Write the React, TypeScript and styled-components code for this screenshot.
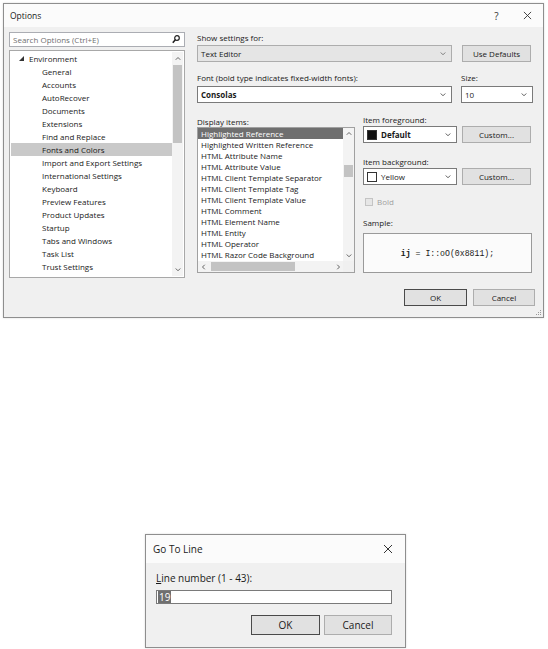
import React from "react";
import styled, { createGlobalStyle } from "styled-components";

const GlobalStyle = createGlobalStyle`
  html, body { margin: 0; padding: 0; background: #ffffff; }
  body { font-family: "Open Sans", "Noto Sans", sans-serif; color: #1a1a1a; }
  * { box-sizing: border-box; }
`;

const Page = styled.div`
  width: 548px;
  height: 649px;
  overflow: hidden;
  display: flex;
  flex-direction: column;
  align-items: flex-start;
`;

/* ---------- generic window ---------- */
const Window = styled.div<{ $w: number; $h: number; $mt: number; $ml: number }>`
  margin-top: ${(p) => p.$mt}px;
  margin-left: ${(p) => p.$ml}px;
  width: ${(p) => p.$w}px;
  height: ${(p) => p.$h}px;
  flex: none;
  border: 1px solid #8e8e8e;
  background: #f0f0f0;
  display: flex;
  flex-direction: column;
  position: relative;
  box-shadow: 0 0 2px rgba(0, 0, 0, 0.15);
`;

const TitleBar = styled.div<{ $h: number; $pl: number }>`
  height: ${(p) => p.$h}px;
  flex: none;
  background: #fbfbfb;
  display: flex;
  align-items: center;
  padding-left: ${(p) => p.$pl}px;
`;

const TitleText = styled.div<{ $size: number }>`
  flex: 1;
  font-size: ${(p) => p.$size}px;
  color: #1a1a1a;
`;

const TitleButton = styled.div<{ $w: number }>`
  width: ${(p) => p.$w}px;
  height: 100%;
  display: flex;
  align-items: center;
  justify-content: center;
  font-size: 10px;
  color: #333;
`;

const CloseX = ({ size }: { size: number }) => (
  <svg width={size} height={size} viewBox="0 0 10 10">
    <path d="M1 1 L9 9 M9 1 L1 9" stroke="#333" strokeWidth="1" fill="none" />
  </svg>
);

type Dir = "up" | "down" | "left" | "right";
const Chevron = ({ dir, color = "#606060", w = 6 }: { dir: Dir; color?: string; w?: number }) => {
  const paths: Record<Dir, string> = {
    down: "M1 2 L4 5 L7 2",
    up: "M1 5 L4 2 L7 5",
    left: "M5 1 L2 4 L5 7",
    right: "M3 1 L6 4 L3 7",
  };
  return (
    <svg width={w} height={w} viewBox="0 0 8 8">
      <path d={paths[dir]} stroke={color} strokeWidth="1.3" fill="none" />
    </svg>
  );
};

/* ---------- Options body ---------- */
const OptionsBody = styled.div`
  flex: 1;
  display: flex;
  flex-direction: column;
  padding: 5px 9px 0 5px;
`;

const MainArea = styled.div`
  display: flex;
  gap: 12px;
  height: 246px;
`;

const LeftPane = styled.div`
  width: 176px;
  display: flex;
  flex-direction: column;
  gap: 3px;
`;

const SearchBox = styled.div`
  height: 15px;
  border: 1px solid #abadb3;
  background: #fff;
  display: flex;
  align-items: center;
  justify-content: space-between;
  padding: 0 4px 0 3px;
  font-size: 8px;
  color: #707070;
`;

const Tree = styled.div`
  height: 228px;
  border: 1px solid #a8a8a8;
  background: #fff;
  display: flex;
  padding: 1px;
`;

const TreeRows = styled.div`
  flex: 1;
  overflow: hidden;
  display: flex;
  flex-direction: column;
`;

const TreeRow = styled.div<{ $indent: number; $selected?: boolean }>`
  height: 13px;
  flex: none;
  display: flex;
  align-items: center;
  gap: 5px;
  padding-left: ${(p) => p.$indent}px;
  font-size: 8px;
  white-space: nowrap;
  background: ${(p) => (p.$selected ? "#c9c9c9" : "transparent")};
`;

const VScroll = styled.div`
  width: 11px;
  flex: none;
  display: flex;
  flex-direction: column;
  background: #f3f3f3;
`;

const ArrowBox = styled.div<{ $h: number }>`
  height: ${(p) => p.$h}px;
  width: 11px;
  flex: none;
  display: flex;
  align-items: center;
  justify-content: center;
`;

const Track = styled.div`
  flex: 1;
  display: flex;
  flex-direction: column;
  align-items: center;
`;

const Thumb = styled.div`
  width: 9px;
  background: #c3c3c3;
`;

const RightPane = styled.div`
  width: 336px;
  display: flex;
  flex-direction: column;
`;

const Row = styled.div<{ $mt?: number; $gap: number }>`
  display: flex;
  gap: ${(p) => p.$gap}px;
  margin-top: ${(p) => p.$mt ?? 0}px;
  flex: none;
`;

const Label = styled.div<{ $w?: number; $h?: number; $mt?: number; $muted?: boolean }>`
  width: ${(p) => (p.$w ? `${p.$w}px` : "auto")};
  height: ${(p) => p.$h ?? 12}px;
  line-height: ${(p) => p.$h ?? 12}px;
  margin-top: ${(p) => p.$mt ?? 0}px;
  font-size: 8px;
  white-space: nowrap;
  color: ${(p) => (p.$muted ? "#a0a0a0" : "#1a1a1a")};
  flex: none;
`;

const Combo = styled.div<{ $w: number; $disabled?: boolean }>`
  width: ${(p) => p.$w}px;
  height: 17px;
  flex: none;
  border: 1px solid ${(p) => (p.$disabled ? "#adadad" : "#7a7a7a")};
  background: ${(p) => (p.$disabled ? "#e5e5e5" : "#ffffff")};
  display: flex;
  align-items: center;
  padding: 0 5px 0 3px;
  gap: 4px;
  font-size: 8px;
`;

const ComboText = styled.span<{ $bold?: boolean }>`
  flex: 1;
  font-weight: ${(p) => (p.$bold ? 700 : 400)};
  white-space: nowrap;
`;

const Swatch = styled.span<{ $fill: string }>`
  width: 10px;
  height: 10px;
  flex: none;
  background: ${(p) => p.$fill};
  border: 1px solid #333;
`;

const Button = styled.div<{ $w: number; $h: number; $default?: boolean; $size?: number }>`
  width: ${(p) => p.$w}px;
  height: ${(p) => p.$h}px;
  flex: none;
  border: 1px solid ${(p) => (p.$default ? "#4a4a4a" : "#adadad")};
  background: #e1e1e1;
  display: flex;
  align-items: center;
  justify-content: center;
  font-size: ${(p) => p.$size ?? 8}px;
  color: #1a1a1a;
`;

const LowerArea = styled.div`
  display: flex;
  gap: 8px;
  margin-top: 11px;
`;

const ItemsCol = styled.div`
  width: 158px;
  display: flex;
  flex-direction: column;
`;

const AttrCol = styled.div`
  width: 170px;
  display: flex;
  flex-direction: column;
`;

const ItemsList = styled.div`
  height: 146px;
  border: 1px solid #a0a0a0;
  background: #fff;
  display: grid;
  grid-template-columns: 1fr 11px;
  grid-template-rows: 1fr 11px;
`;

const ItemsRows = styled.div`
  overflow: hidden;
  display: flex;
  flex-direction: column;
`;

const ItemRow = styled.div<{ $selected?: boolean }>`
  height: 11px;
  flex: none;
  display: flex;
  align-items: center;
  padding-left: 3px;
  font-size: 8px;
  white-space: nowrap;
  background: ${(p) => (p.$selected ? "#6f6f6f" : "transparent")};
  color: ${(p) => (p.$selected ? "#ffffff" : "#1a1a1a")};
`;

const HScroll = styled.div`
  display: flex;
  align-items: center;
  background: #f3f3f3;
`;

const HTrack = styled.div`
  flex: 1;
  height: 100%;
  display: flex;
  align-items: center;
`;

const HThumb = styled.div`
  height: 9px;
  background: #c3c3c3;
`;

const Corner = styled.div`
  background: #f0f0f0;
`;

const CheckRow = styled.div`
  margin-top: 11px;
  height: 12px;
  display: flex;
  align-items: center;
  gap: 4px;
  padding-left: 2px;
`;

const CheckBox = styled.span`
  width: 8px;
  height: 8px;
  border: 1px solid #c4c4c4;
  background: #e6e6e6;
`;

const SampleBox = styled.div`
  margin-top: 4px;
  height: 40px;
  width: 169px;
  border: 1px solid #9a9a9a;
  background: #fbfbfb;
  display: flex;
  align-items: center;
  justify-content: center;
  font-family: "Liberation Mono", "DejaVu Sans Mono", monospace;
  font-size: 8.2px;
  color: #1a1a1a;
`;

const ButtonBar = styled.div<{ $mt: number; $gap: number; $mr: number }>`
  display: flex;
  justify-content: flex-end;
  gap: ${(p) => p.$gap}px;
  margin-top: ${(p) => p.$mt}px;
  margin-right: ${(p) => p.$mr}px;
`;

const Grip = styled.div`
  position: absolute;
  right: 1px;
  bottom: 1px;
  width: 8px;
  height: 8px;
  display: flex;
`;

/* ---------- Go To Line ---------- */
const GoBody = styled.div`
  flex: 1;
  display: flex;
  flex-direction: column;
  padding: 9px 13px 0 10px;
`;

const GoLabel = styled.div`
  height: 13px;
  line-height: 13px;
  font-size: 10px;
  color: #1a1a1a;
`;

const Underlined = styled.span`
  text-decoration: underline;
`;

const TextInput = styled.div`
  margin-top: 5px;
  height: 14px;
  border: 1px solid #7a7a7a;
  background: #fff;
  display: flex;
  align-items: center;
  padding-left: 1px;
`;

const Selection = styled.span`
  background: #6f6f6f;
  color: #fff;
  font-size: 10px;
  line-height: 12px;
  height: 12px;
  padding: 0 1px;
`;

const SearchIcon = () => (
  <svg width="8" height="9" viewBox="0 0 8 9">
    <circle cx="5" cy="3" r="2.3" stroke="#222" strokeWidth="1.2" fill="none" />
    <path d="M3.3 4.8 L0.8 7.8" stroke="#222" strokeWidth="1.6" />
  </svg>
);

const ExpandedTri = () => (
  <svg width="5" height="5" viewBox="0 0 5 5">
    <polygon points="5,0 5,5 0,5" fill="#333" />
  </svg>
);

const treeItems = [
  "General",
  "Accounts",
  "AutoRecover",
  "Documents",
  "Extensions",
  "Find and Replace",
  "Fonts and Colors",
  "Import and Export Settings",
  "International Settings",
  "Keyboard",
  "Preview Features",
  "Product Updates",
  "Startup",
  "Tabs and Windows",
  "Task List",
  "Trust Settings",
  "Web Browser",
];

const displayItems = [
  "Highlighted Reference",
  "Highlighted Written Reference",
  "HTML Attribute Name",
  "HTML Attribute Value",
  "HTML Client Template Separator",
  "HTML Client Template Tag",
  "HTML Client Template Value",
  "HTML Comment",
  "HTML Element Name",
  "HTML Entity",
  "HTML Operator",
  "HTML Razor Code Background",
];

export default function App() {
  return (
    <Page>
      <GlobalStyle />
      <Window $w={541} $h={315} $mt={3} $ml={3}>
        <TitleBar $h={23} $pl={6}>
          <TitleText $size={8.5}>Options</TitleText>
          <TitleButton $w={31}>?</TitleButton>
          <TitleButton $w={31}>
            <CloseX size={9} />
          </TitleButton>
        </TitleBar>
        <OptionsBody>
          <MainArea>
            <LeftPane>
              <SearchBox>
                <span>Search Options (Ctrl+E)</span>
                <SearchIcon />
              </SearchBox>
              <Tree>
                <TreeRows>
                  <TreeRow $indent={8}>
                    <ExpandedTri />
                    <span>Environment</span>
                  </TreeRow>
                  {treeItems.map((t) => (
                    <TreeRow key={t} $indent={31} $selected={t === "Fonts and Colors"}>
                      {t}
                    </TreeRow>
                  ))}
                </TreeRows>
                <VScroll>
                  <ArrowBox $h={13}>
                    <Chevron dir="up" />
                  </ArrowBox>
                  <Track>
                    <Thumb style={{ height: 78 }} />
                  </Track>
                  <ArrowBox $h={13}>
                    <Chevron dir="down" />
                  </ArrowBox>
                </VScroll>
              </Tree>
            </LeftPane>
            <RightPane>
              <Label>Show settings for:</Label>
              <Row $mt={1} $gap={10}>
                <Combo $w={255} $disabled>
                  <ComboText>Text Editor</ComboText>
                  <Chevron dir="down" color="#777" />
                </Combo>
                <Button $w={69} $h={17}>
                  Use Defaults
                </Button>
              </Row>
              <Row $mt={10} $gap={9}>
                <Label $w={255}>Font (bold type indicates fixed-width fonts):</Label>
                <Label>Size:</Label>
              </Row>
              <Row $mt={2} $gap={9}>
                <Combo $w={255}>
                  <ComboText $bold>Consolas</ComboText>
                  <Chevron dir="down" color="#555" />
                </Combo>
                <Combo $w={72}>
                  <ComboText>10</ComboText>
                  <Chevron dir="down" color="#555" />
                </Combo>
              </Row>
              <LowerArea>
                <ItemsCol>
                  <Label $h={11} $mt={2}>Display items:</Label>
                  <ItemsList>
                    <ItemsRows>
                      {displayItems.map((t, i) => (
                        <ItemRow key={t} $selected={i === 0}>
                          {t}
                        </ItemRow>
                      ))}
                    </ItemsRows>
                    <VScroll>
                      <ArrowBox $h={11}>
                        <Chevron dir="up" />
                      </ArrowBox>
                      <Track>
                        <Thumb style={{ marginTop: 26, height: 12 }} />
                      </Track>
                      <ArrowBox $h={11}>
                        <Chevron dir="down" />
                      </ArrowBox>
                    </VScroll>
                    <HScroll>
                      <ArrowBox $h={11}>
                        <Chevron dir="left" />
                      </ArrowBox>
                      <HTrack>
                        <HThumb style={{ marginLeft: 2, width: 84 }} />
                      </HTrack>
                      <ArrowBox $h={11}>
                        <Chevron dir="right" />
                      </ArrowBox>
                    </HScroll>
                    <Corner />
                  </ItemsList>
                </ItemsCol>
                <AttrCol>
                  <Label $h={11}>Item foreground:</Label>
                  <Row $mt={1} $gap={5}>
                    <Combo $w={94}>
                      <Swatch $fill="#111" />
                      <ComboText $bold>Default</ComboText>
                      <Chevron dir="down" color="#555" />
                    </Combo>
                    <Button $w={69} $h={17}>
                      Custom...
                    </Button>
                  </Row>
                  <Label $h={11} $mt={13}>Item background:</Label>
                  <Row $mt={1} $gap={5}>
                    <Combo $w={94}>
                      <Swatch $fill="#fff" />
                      <ComboText>Yellow</ComboText>
                      <Chevron dir="down" color="#555" />
                    </Combo>
                    <Button $w={69} $h={17}>
                      Custom...
                    </Button>
                  </Row>
                  <CheckRow>
                    <CheckBox />
                    <Label $muted>Bold</Label>
                  </CheckRow>
                  <Label $mt={9}>Sample:</Label>
                  <SampleBox>
                    <b>ij</b>&nbsp;= I::oO(0x8811);
                  </SampleBox>
                </AttrCol>
              </LowerArea>
            </RightPane>
          </MainArea>
          <ButtonBar $mt={11} $gap={6} $mr={-1}>
            <Button $w={63} $h={17} $default>
              OK
            </Button>
            <Button $w={62} $h={17}>
              Cancel
            </Button>
          </ButtonBar>
        </OptionsBody>
        <Grip>
          <svg width="8" height="8" viewBox="0 0 8 8">
            <rect x="6" y="2" width="1" height="1" fill="#999" />
            <rect x="4" y="4" width="1" height="1" fill="#999" />
            <rect x="6" y="4" width="1" height="1" fill="#999" />
            <rect x="2" y="6" width="1" height="1" fill="#999" />
            <rect x="4" y="6" width="1" height="1" fill="#999" />
            <rect x="6" y="6" width="1" height="1" fill="#999" />
          </svg>
        </Grip>
      </Window>

      <Window $w={261} $h={114} $mt={216} $ml={145}>
        <TitleBar $h={28} $pl={7}>
          <TitleText $size={10}>Go To Line</TitleText>
          <TitleButton $w={34}>
            <CloseX size={10} />
          </TitleButton>
        </TitleBar>
        <GoBody>
          <GoLabel>
            <Underlined>L</Underlined>ine number (1 - 43):
          </GoLabel>
          <TextInput>
            <Selection>19</Selection>
          </TextInput>
          <ButtonBar $mt={11} $gap={4} $mr={0}>
            <Button $w={69} $h={20} $size={10} $default>
              OK
            </Button>
            <Button $w={68} $h={20} $size={10}>
              Cancel
            </Button>
          </ButtonBar>
        </GoBody>
      </Window>
    </Page>
  );
}
